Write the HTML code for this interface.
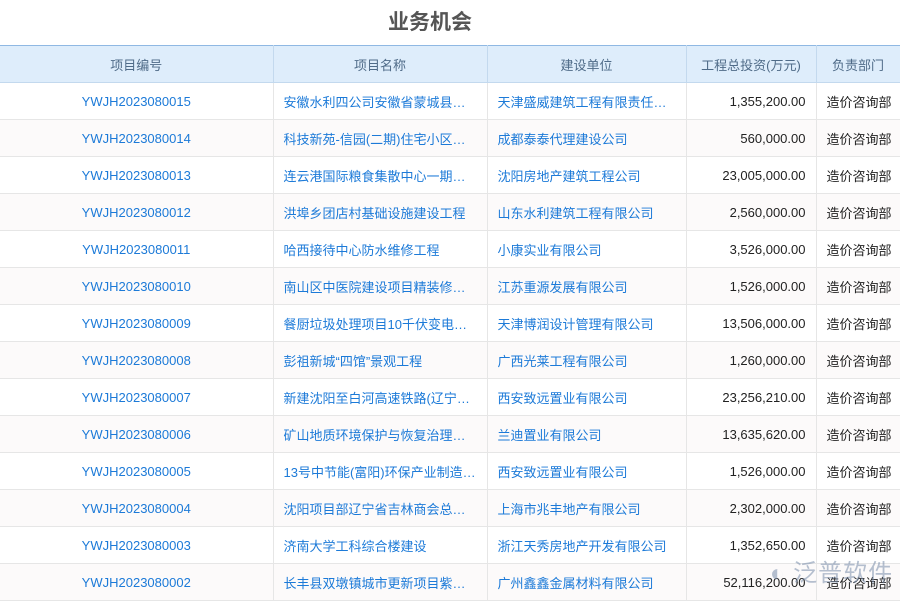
<html><head><style>
body{margin:0;width:900px;height:600px;overflow:hidden;background:#fff;font-family:"Liberation Sans","Noto Sans CJK SC",sans-serif;position:relative}
h1{margin:0;position:absolute;top:6px;left:0;width:860px;text-align:center;font-size:21px;color:#555;font-weight:bold}
table{position:absolute;top:45px;left:0;border-collapse:collapse;width:900px;table-layout:fixed;font-size:13px}
th{background:#deedfb;color:#4f6b88;font-weight:normal;height:37px;border-top:1px solid #8fb8e3;border-right:1px solid #c3d9ee;border-bottom:1px solid #c3d9ee;padding:0}
td{height:37px;border-bottom:1px solid #e6e6e6;border-right:1px solid #e6e6e6;color:#1c7ad8;white-space:nowrap;overflow:hidden;padding:0 10px}
tr:nth-child(odd) td{background:#fcfafa}
td.c{text-align:center}td.r{text-align:right;color:#222}td.d{color:#222}
.wm{position:absolute;left:770px;top:553px;font-size:24px;color:rgba(120,140,170,.55);letter-spacing:1px}
</style></head><body>
<h1>业务机会</h1>
<table>
<colgroup><col style="width:273px"><col style="width:214px"><col style="width:199px"><col style="width:130px"><col style="width:84px"></colgroup>
<tr><th>项目编号</th><th>项目名称</th><th>建设单位</th><th>工程总投资(万元)</th><th>负责部门</th></tr>
<tr><td class="c">YWJH2023080015</td><td>安徽水利四公司安徽省蒙城县…</td><td>天津盛威建筑工程有限责任…</td><td class="r">1,355,200.00</td><td class="d">造价咨询部</td></tr>
<tr><td class="c">YWJH2023080014</td><td>科技新苑-信园(二期)住宅小区…</td><td>成都泰泰代理建设公司</td><td class="r">560,000.00</td><td class="d">造价咨询部</td></tr>
<tr><td class="c">YWJH2023080013</td><td>连云港国际粮食集散中心一期…</td><td>沈阳房地产建筑工程公司</td><td class="r">23,005,000.00</td><td class="d">造价咨询部</td></tr>
<tr><td class="c">YWJH2023080012</td><td>洪埠乡团店村基础设施建设工程</td><td>山东水利建筑工程有限公司</td><td class="r">2,560,000.00</td><td class="d">造价咨询部</td></tr>
<tr><td class="c">YWJH2023080011</td><td>哈西接待中心防水维修工程</td><td>小康实业有限公司</td><td class="r">3,526,000.00</td><td class="d">造价咨询部</td></tr>
<tr><td class="c">YWJH2023080010</td><td>南山区中医院建设项目精装修…</td><td>江苏重源发展有限公司</td><td class="r">1,526,000.00</td><td class="d">造价咨询部</td></tr>
<tr><td class="c">YWJH2023080009</td><td>餐厨垃圾处理项目10千伏变电…</td><td>天津博润设计管理有限公司</td><td class="r">13,506,000.00</td><td class="d">造价咨询部</td></tr>
<tr><td class="c">YWJH2023080008</td><td>彭祖新城“四馆”景观工程</td><td>广西光莱工程有限公司</td><td class="r">1,260,000.00</td><td class="d">造价咨询部</td></tr>
<tr><td class="c">YWJH2023080007</td><td>新建沈阳至白河高速铁路(辽宁…</td><td>西安致远置业有限公司</td><td class="r">23,256,210.00</td><td class="d">造价咨询部</td></tr>
<tr><td class="c">YWJH2023080006</td><td>矿山地质环境保护与恢复治理…</td><td>兰迪置业有限公司</td><td class="r">13,635,620.00</td><td class="d">造价咨询部</td></tr>
<tr><td class="c">YWJH2023080005</td><td>13号中节能(富阳)环保产业制造…</td><td>西安致远置业有限公司</td><td class="r">1,526,000.00</td><td class="d">造价咨询部</td></tr>
<tr><td class="c">YWJH2023080004</td><td>沈阳项目部辽宁省吉林商会总…</td><td>上海市兆丰地产有限公司</td><td class="r">2,302,000.00</td><td class="d">造价咨询部</td></tr>
<tr><td class="c">YWJH2023080003</td><td>济南大学工科综合楼建设</td><td>浙江天秀房地产开发有限公司</td><td class="r">1,352,650.00</td><td class="d">造价咨询部</td></tr>
<tr><td class="c">YWJH2023080002</td><td>长丰县双墩镇城市更新项目紫…</td><td>广州鑫鑫金属材料有限公司</td><td class="r">52,116,200.00</td><td class="d">造价咨询部</td></tr>
</table>
<div class="wm">◐ 泛普软件</div>
</body></html>
